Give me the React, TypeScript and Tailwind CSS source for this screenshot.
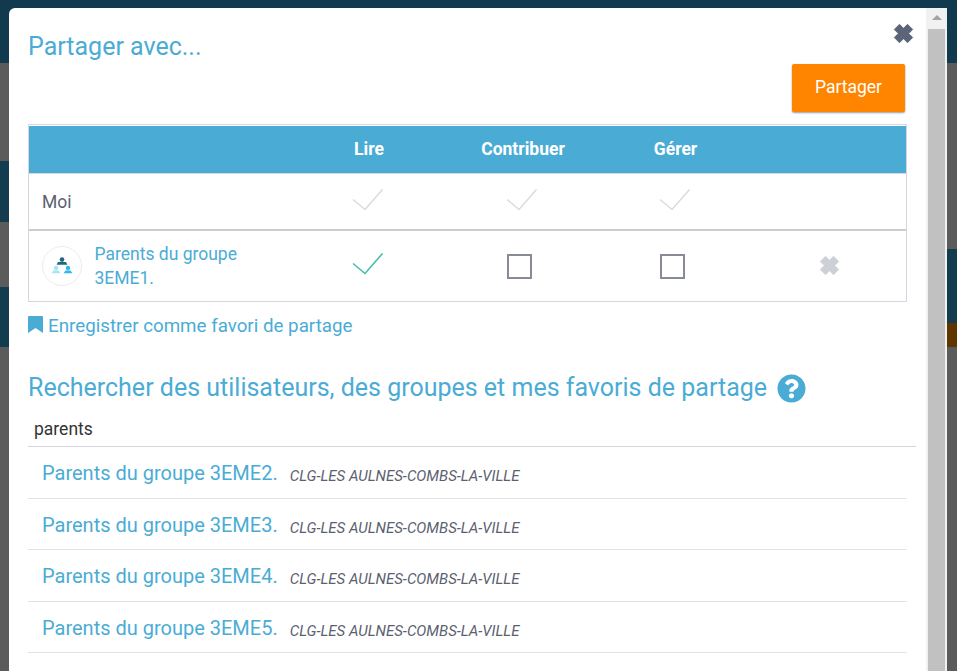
import React from "react";
import { FaQuestionCircle } from "react-icons/fa";

const Check = ({ color }: { color: string }) => (
  <svg width="32" height="24" viewBox="0 0 32 24" fill="none">
    <path d="M1 10.5 L13 20.5 L30.5 0.5" stroke={color} strokeWidth="1.6" />
  </svg>
);

const Box = () => <div className="w-[25px] h-[25px] border-2 border-[#868b96]" />;

const Cross = ({ size, color }: { size: number; color: string }) => (
  <svg width={size} height={size} viewBox="0 0 20 20">
    <path d="M2 6.5 L6.5 2 L10 5.5 L13.5 2 L18 6.5 L14.5 10 L18 13.5 L13.5 18 L10 14.5 L6.5 18 L2 13.5 L5.5 10 Z" fill={color} stroke={color} strokeWidth="0.8" strokeLinejoin="round" />
  </svg>
);

const GroupIcon = () => (
  <svg width="22" height="20" viewBox="0 0 22 20">
    <circle cx="11" cy="3.6" r="2.3" fill="#1d6a80" />
    <path d="M7 6 H15 L16.4 8.8 H5.6 Z" fill="#1d6a80" />
    <circle cx="5" cy="12" r="2.2" fill="#a5e3f7" />
    <path d="M2.4 14.4 H7.6 L9.4 17.2 H0.6 Z" fill="#a5e3f7" />
    <circle cx="17" cy="12" r="2.2" fill="#2db9ec" />
    <path d="M14.4 14.4 H19.6 L21.4 17.2 H12.6 Z" fill="#2db9ec" />
  </svg>
);

const results = ["3EME2", "3EME3", "3EME4", "3EME5"];

export default function App() {
  return (
    <div className="relative w-[957px] h-[671px] overflow-hidden bg-[#5b5b5b] font-['Roboto',sans-serif]">
      <div className="h-[63px] bg-[#123a4e]" />
      <div className="flex justify-between h-[608px]">
        <div className="w-[9px] flex flex-col">
          <div className="h-[98px] shrink-0" />
          <div className="h-[61px] bg-[#143c4f]" />
          <div className="h-[65px] shrink-0" />
          <div className="h-[60px] bg-[#143c4f]" />
        </div>
        <div className="w-[10px] flex flex-col">
          <div className="h-[186px] shrink-0" />
          <div className="h-[74px] bg-[#143c4f]" />
          <div className="h-[24px] bg-[#5f3500]" />
        </div>
      </div>

      <div className="absolute left-[9px] top-[8px] w-[938px] h-[663px] flex bg-white rounded-tl-md overflow-hidden">
        <div className="w-[917px] pl-[19px] relative">
          <div className="absolute right-[11px] top-[14px]">
            <Cross size={23} color="#5b6478" />
          </div>
          <h2 className="pt-[23px] text-[25px] leading-[32px] text-[#4aacd5]">Partager avec...</h2>
          <div className="flex justify-end pr-[2px] mt-[1px] w-[879px]">
            <button className="w-[113px] h-[48px] pb-[2px] rounded-[2px] bg-[#ff8500] text-white text-[17.5px] shadow-[0_1px_2px_rgba(0,0,0,0.4)]">
              Partager
            </button>
          </div>

          <div className="mt-[12px] w-[879px] border border-[#d6d6e0]">
            <div className="grid grid-cols-[262px_154px_154px_154px_1fr] h-[48px] mt-[1px] bg-[#4aacd5] border-b border-[#d6d6e0] items-center text-white text-[17.5px] font-bold text-center">
              <div />
              <div className="pl-[2px]">Lire</div>
              <div className="pl-[2px]">Contribuer</div>
              <div className="pr-[1px]">Gérer</div>
              <div />
            </div>
            <div className="grid grid-cols-[262px_154px_154px_154px_1fr] h-[57px] items-center border-b-2 border-[#cccccc]">
              <div className="pl-[13px] pt-[2px] text-[17.5px] text-[#5b5f70]">Moi</div>
              <div className="flex justify-center pb-[2px]"><Check color="#dadce2" /></div>
              <div className="flex justify-center pb-[2px] pr-[1px]"><Check color="#dadce2" /></div>
              <div className="flex justify-center pb-[2px] pr-[3px]"><Check color="#dadce2" /></div>
              <div />
            </div>
            <div className="grid grid-cols-[262px_154px_154px_154px_1fr] h-[70px] items-center">
              <div className="flex items-center pl-[13px] gap-[12.5px]">
                <div className="w-[40px] h-[40px] shrink-0 rounded-full border border-[#ececf0] flex items-center justify-center">
                  <GroupIcon />
                </div>
                <div className="text-[17.5px] leading-[24px] text-[#4aacd5] w-[160px]">Parents du groupe 3EME1.</div>
              </div>
              <div className="flex justify-center pb-[2px]"><Check color="#44bfa8" /></div>
              <div className="flex justify-center pr-[6px]"><Box /></div>
              <div className="flex justify-center pr-[7px]"><Box /></div>
              <div className="flex justify-center pr-[1px] pb-[2px]"><Cross size={23} color="#cdd0d6" /></div>
            </div>
          </div>

          <div className="flex items-center gap-[5px] mt-[12px] h-[24px] text-[18.75px] text-[#4aacd5]">
            <svg width="15" height="17" viewBox="0 0 15 17" className="mb-[3px]">
              <path d="M1 0 H14 Q15 0 15 1 V17 L7.5 12 L0 17 V1 Q0 0 1 0 Z" fill="#4aacd5" />
            </svg>
            <span>Enregistrer comme favori de partage</span>
          </div>

          <div className="flex items-center mt-[32px] h-[36px]">
            <span className="text-[25px] text-[#4aacd5]">Rechercher des utilisateurs, des groupes et mes favoris de partage</span>
            <FaQuestionCircle className="ml-[10px] text-[#4aacd5]" size={29} />
          </div>

          <div className="mt-[8px] h-[33px] w-[888px] border-b border-[#d6d6e0] pl-[6px] text-[17.5px] leading-[30px] text-[#333]">parents</div>

          <div className="w-[879px]">
            {results.map((r) => (
              <div key={r} className="h-[51.6px] pt-[2px] flex items-center border-b border-[#e3e3e3] pl-[14px]">
                <span className="text-[20px] text-[#4aacd5]">Parents du groupe {r}.</span>
                <span className="ml-[12px] pt-[6px] italic text-[15px] text-[#5b5f70]">CLG-LES AULNES-COMBS-LA-VILLE</span>
              </div>
            ))}
          </div>
        </div>

        <div className="w-[21px] h-full bg-[#f1f1f1] flex flex-col pl-[2px] pr-[2px]">
          <div className="h-[21px] shrink-0 flex items-center justify-center pb-[2px]">
            <div className="w-0 h-0 border-x-[5px] border-x-transparent border-b-[5px] border-b-[#a3a3a3]" />
          </div>
          <div className="flex-1 bg-[#c1c1c1]" />
        </div>
      </div>
    </div>
  );
}
